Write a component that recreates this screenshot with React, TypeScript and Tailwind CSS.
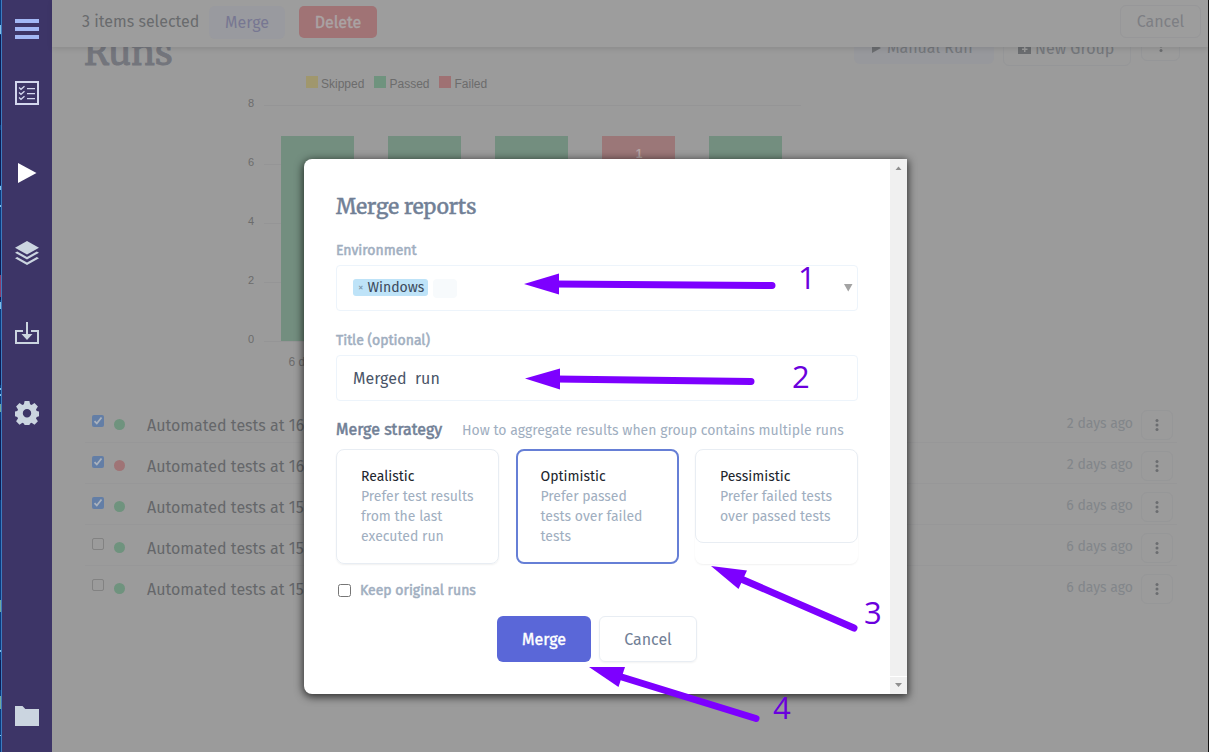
import React from "react";

const sans = "font-['Fira_Sans','Noto_Sans',sans-serif]";
const serif = "font-['Merriweather','DejaVu_Serif_Condensed','DejaVu_Serif',serif]";

const runs = [
  { checked: true, passed: true, title: "Automated tests at 16", when: "2 days ago" },
  { checked: true, passed: false, title: "Automated tests at 16", when: "2 days ago" },
  { checked: true, passed: true, title: "Automated tests at 15", when: "6 days ago" },
  { checked: false, passed: true, title: "Automated tests at 15", when: "6 days ago" },
  { checked: false, passed: true, title: "Automated tests at 15", when: "6 days ago" },
];

function Kebab() {
  return (
    <svg width="4" height="14" viewBox="0 0 4 14" fill="#6b6d70">
      <circle cx="2" cy="2.5" r="1.500" />
      <circle cx="2" cy="7" r="1.500" />
      <circle cx="2" cy="11.5" r="1.500" />
    </svg>
  );
}

function Sidebar() {
  return (
    <nav className="relative h-full w-[50px] shrink-0 bg-[#3d3567]">
      <svg width="50" height="752" viewBox="2 0 50 752" fill="#cbd5e0">
        <path fill="#a3b8f5" d="M15 19h24v4H15zM15 27h24v4H15zM15 35h24v4H15z" />
        <path
          fillRule="evenodd"
          fill="#d3d7ee"
          d="M15 81h24v24H15zM17 83v20h20V83zM27 88h8v1.2h-8zM27 93h8v1.2h-8zM27 98h8v1.2h-8z"
        />
        <path
          fill="none"
          stroke="#d3d7ee"
          strokeWidth="1.3"
          d="M19 87.5l2 1.8 3.5-3M19 92.5l2 1.8 3.5-3M19 97.5l2 1.8 3.5-3"
        />
        <path fill="#fff" d="M18 163l18.500 10L18 183z" />
        <path d="M27 241l12 6.700-12 6.700-12-6.700z" />
        <path d="M15 252.700l2.200-1.200 9.800 5.400 9.800-5.400 2.200 1.200-12 6.700z" />
        <path d="M15 258.200l2.200-1.200 9.800 5.400 9.800-5.400 2.200 1.200-12 6.700z" />
        <path d="M15 330h8v2h-6v10h20v-10h-6v-2h8v14H15z" />
        <path d="M26 322h2v12h4.500L27 340l-5.500-6H26z" />
        <path
          fillRule="evenodd"
          d="M24.600 401h4.800l.7 3.300 1.500.7 2.900-1.900 3.400 3.400-1.900 2.900.7 1.500 2.300.5v4.800l-2.300.7-.7 1.500 1.900 2.900-3.400 3.400-2.900-1.900-1.500.7-.7 1.500h-4.800l-.7-1.500-1.500-.7-2.900 1.900-3.400-3.400 1.900-2.900-.7-1.500-2.300-.7v-4.800l2.300-.5.7-1.500-1.900-2.900 3.400-3.400 2.900 1.900 1.500-.7zM27 409a4.200 4.200 0 1 0 0 8.400a4.200 4.200 0 1 0 0-8.400z"
        />
        <path d="M15 706h7.500l2.800 3H39v17H15z" />
      </svg>
    </nav>
  );
}

function Toolbar() {
  return (
    <header className="relative z-10 flex h-[47px] shrink-0 items-start bg-[#9d9d9d] pl-[30px] pr-[7px] shadow-[0_2px_5px_rgba(0,0,0,0.1)]">
      <span className="mt-[10px] w-[127px] whitespace-nowrap text-[16px] leading-6 text-[#696b6d]">3 items selected</span>
      <button className="mt-[6px] h-[33px] w-[76px] rounded-md bg-[#999a9f] text-[16px] leading-[31px] text-[#777792]">
        Merge
      </button>
      <button className="ml-[14px] mt-[6px] h-[32px] w-[78px] rounded-[5px] bg-[#a07375] text-[16px] leading-[31px] text-[#aaa3a4] [-webkit-text-stroke:0.4px_#aaa3a4]">
        Delete
      </button>
      <button className="ml-auto mt-[5px] h-[33px] w-[81px] rounded-md border border-[#979799] text-[16px] leading-[31px] text-[#7d7f84]">
        Cancel
      </button>
    </header>
  );
}

function Chart() {
  const bars = [229, 336, 443, 550, 657];
  return (
    <svg
      width="760"
      height="304"
      viewBox="0 72 760 304"
      className="block font-['Liberation_Sans',Arial,sans-serif] text-[12px]"
      fill="#6c6c6c"
    >
      <rect x="254" y="76" width="12" height="12" fill="#a0976d" />
      <text x="269" y="88">Skipped</text>
      <rect x="322" y="76" width="12" height="12" fill="#6f937e" />
      <text x="337.500" y="88">Passed</text>
      <rect x="387" y="76" width="12" height="12" fill="#9f7173" />
      <text x="402.500" y="88">Failed</text>
      {[8, 6, 4, 2, 0].map((n, i) => (
        <g key={n}>
          <rect x="212" y={105 + i * 59} width="537" height="1" fill="#959596" />
          <text x="202" y={107 + i * 59} textAnchor="end" fontSize="11">{n}</text>
        </g>
      ))}
      {bars.map((x, i) => (
        <rect key={x} x={x} y="136" width="73" height="205" fill={i === 3 ? "#9b7778" : "#738e7f"} />
      ))}
      <text x="587" y="158" textAnchor="middle" fill="#b5a5a5" fontWeight="bold">1</text>
      <text x="236.500" y="366">6 days ago</text>
    </svg>
  );
}

function RunList() {
  return (
    <ul className="ml-[33px] mr-[31px] mt-[26px]">
      {runs.map((r, i) => (
        <li
          key={i}
          className={
            "flex h-[41px] items-start pl-[7px] " + (i < runs.length - 1 ? "border-b border-[#979798]" : "")
          }
        >
          <span
            className={
              "mt-[13px] flex h-[12px] w-[12px] items-center justify-center rounded-[2px] " +
              (r.checked ? "bg-[#637ea6]" : "border border-[#828282]")
            }
          >
            {r.checked && (
              <svg width="10" height="10" viewBox="0 0 10 10" fill="none" stroke="#aab2bd" strokeWidth="1.800">
                <path d="M1.500 5.200l2.300 2.300 4.700-6" />
              </svg>
            )}
          </span>
          <span
            className={"ml-[10px] mt-[17px] h-[11px] w-[11px] rounded-full " + (r.passed ? "bg-[#6f937e]" : "bg-[#9f7476]")}
          />
          <span className="ml-[22px] mt-[12px] whitespace-nowrap text-[16px] leading-6 text-[#65676a]">{r.title}</span>
          <span className="ml-auto mt-[12px] whitespace-nowrap text-[14px] leading-5 text-[#82868a]">{r.when}</span>
          <span className="ml-[8px] mr-[4px] mt-[8px] flex h-[30px] w-[32px] items-center justify-center rounded-md border border-[#969798]">
            <Kebab />
          </span>
        </li>
      ))}
    </ul>
  );
}

function Page() {
  return (
    <main className="flex h-full min-w-0 grow flex-col bg-[#9b9b9b]">
      <Toolbar />
      <div className="h-[705px] overflow-hidden">
        <div className="-mt-[25px] flex h-[50px] items-start pl-[32px] pr-[28px]">
          <h1 className={serif + " mt-[11px] text-[36px] leading-[40px] text-[#73757c] [-webkit-text-stroke:0.9px_#73757c]"}>Runs</h1>
          <button className="ml-auto mt-[9px] flex h-[33px] w-[140px] items-center whitespace-nowrap rounded-md bg-[#97989c] pl-[18px] text-[16px] text-[#74777b]">
            <svg width="10" height="12" viewBox="0 0 10 12" className="mr-[5px]" fill="#6b6d70">
              <path d="M0 1l9 5-9 5z" />
            </svg>
            Manual Run
          </button>
          <button className="ml-[9px] mt-[9px] flex h-[35px] w-[128px] items-center whitespace-nowrap rounded-md border border-[#959698] pl-[14px] text-[16px] text-[#74777b]">
            <svg width="13" height="12" viewBox="0 0 13 12" className="mr-[4px] shrink-0" fill="#6b6d70">
              <path fillRule="evenodd" d="M0 0h5l2 2h6v9H0zM6 3.500v2H4V7h2v2h1.500V7h2V5.500h-2v-2z" />
            </svg>
            New Group
          </button>
          <span className="ml-[10px] mt-[9px] flex h-[30px] w-[39px] items-center justify-center rounded-md border border-[#959698]">
            <Kebab />
          </span>
        </div>
        <Chart />
        <RunList />
      </div>
    </main>
  );
}

function Strategy({ title, lines, className }: { title: string; lines: string[]; className: string }) {
  return (
    <div className={"box-border w-[163px] rounded-lg text-[14px] leading-5 " + className}>
      <div className="text-[#20242c]">{title}</div>
      {lines.map((l) => (
        <div key={l} className="whitespace-nowrap text-[#a0aec0]">{l}</div>
      ))}
    </div>
  );
}

function MergeDialog() {
  return (
    <section className="flex h-[535px] w-[603px] overflow-hidden rounded-l-lg bg-white shadow-[0_2px_9px_1px_rgba(0,0,0,0.7)]">
      <div className="w-[586px] pl-[32px] pt-[32px]">
        <h2 className={serif + " text-[20.700px] leading-[32px] text-[#718096] [-webkit-text-stroke:0.5px_#718096]"}>Merge reports</h2>

        <div className="mt-[18px] text-[14px] leading-5 text-[#a0aec0] [-webkit-text-stroke:0.5px_#a0aec0]">Environment</div>
        <div className="mt-[4px] flex h-[46px] w-[522px] items-center rounded border border-[#edf4fb] pl-[16px] pr-[4px]">
          <span className="mb-[2px] flex h-[17px] w-[75px] items-center rounded-[3px] bg-[#bee3f8] pl-[5px] text-[14px] leading-[17px] text-[#3c4a5c]">
            <span className="mr-[4px] text-[11px] text-[#7b97ab]">×</span>Windows
          </span>
          <span className="ml-[5px] h-[19px] w-[24px] rounded bg-[#f7fafc]" />
          <svg width="9" height="8" viewBox="0 0 9 8" className="ml-auto" fill="#a3a3a3">
            <path d="M0 0h8.500L4.250 7.500z" />
          </svg>
        </div>

        <div className="mt-[20px] text-[14px] leading-5 text-[#a0aec0] [-webkit-text-stroke:0.5px_#a0aec0]">Title (optional)</div>
        <div className="mt-[4px] flex h-[46px] w-[522px] items-center whitespace-pre rounded border border-[#edf4fb] pl-[16px] pt-px text-[16px] text-[#4a5568]">
          {"Merged  run"}
        </div>

        <div className="mt-[17px] flex h-[24px] items-center whitespace-nowrap">
          <span className="w-[126px] text-[16px] text-[#718096] [-webkit-text-stroke:0.55px_#718096]">Merge strategy</span>
          <span className="text-[14px] text-[#a0aec0]">How to aggregate results when group contains multiple runs</span>
        </div>

        <div className="mt-[7px] flex h-[115px] items-stretch gap-[16.500px]">
          <Strategy
            title="Realistic"
            lines={["Prefer test results", "from the last", "executed run"]}
            className="border border-[#e8edf3] pl-[24px] pt-[17px] shadow-[0_1px_2px_rgba(0,0,0,0.06)]"
          />
          <Strategy
            title="Optimistic"
            lines={["Prefer passed", "tests over failed", "tests"]}
            className="border-2 border-[#667fd6] pl-[23px] pt-[16px]"
          />
          <div className="rounded-lg shadow-[0_1px_2px_rgba(0,0,0,0.06)]">
            <Strategy
              title="Pessimistic"
              lines={["Prefer failed tests", "over passed tests"]}
              className="h-[94px] border border-[#e8edf3] pl-[24px] pt-[17px]"
            />
          </div>
        </div>

        <div className="mt-[16px] flex h-[20px] items-center text-[14px] text-[#a0aec0] [-webkit-text-stroke:0.5px_#a0aec0]">
          <span className="ml-[2px] mr-[9px] h-[13px] w-[13px] rounded-[2.500px] border border-[#767676]" />
          Keep original runs
        </div>

        <div className="mt-[16px] flex gap-[8px] pl-[161px] text-[16px]">
          <button className="h-[46px] w-[94px] rounded-md bg-[#5a67d8] pt-px text-white [-webkit-text-stroke:0.4px_#fff]">Merge</button>
          <button className="h-[46px] w-[98px] rounded-md border border-[#e8edf3] pt-px text-[#718096] shadow-[0_1px_2px_rgba(0,0,0,0.05)]">
            Cancel
          </button>
        </div>
      </div>
      <div className="flex w-[17px] flex-col items-center justify-between bg-[#f0f0f0]">
        <svg width="17" height="17" viewBox="0 0 17 17" fill="#8f8f8f">
          <path d="M5.500 11L8.500 7.500l3 3.500z" />
        </svg>
        <svg width="17" height="18" viewBox="0 0 17 18" fill="#8f8f8f">
          <path fill="#fff" d="M0 0h17v1H0z" />
          <path d="M5 7h7L8.500 11z" />
        </svg>
      </div>
    </section>
  );
}

const arrows = [
  { head: "524,284 559,273.500 559,294.500", line: "M555 284L772 285.500" },
  { head: "525,378.500 560,368.500 560,389.500", line: "M556 379L751 381.500" },
  { head: "711,566 747,570.500 738.500,589", line: "M740 578.500L854 628" },
  { head: "589,667 625,667 618.500,687", line: "M620 676.500L756 718.500" },
];

const digits = [
  { n: "1", at: "left-[798px] top-[258px]" },
  { n: "2", at: "left-[792px] top-[357px]" },
  { n: "3", at: "left-[864px] top-[593px]" },
  { n: "4", at: "left-[773px] top-[688px]" },
];

export default function App() {
  return (
    <div className={sans + " relative flex h-[752px] w-[1209px] overflow-hidden border-r border-[#111] bg-[#9b9b9b]"}>
      <svg width="2" height="752" viewBox="0 0 2 752" className="shrink-0">
        <path fill="#0a3a7e" d="M0 0h2v752H0z" />
        <path
          fill="#0b1c55"
          d="M0 35h1v90H0zM0 130h1v55H0zM0 240h1v60H0zM0 340h1v45H0zM0 420h1v80H0zM0 660h1v30H0z"
        />
        <path fill="#82bfe8" d="M0 25h1v9H0zM0 186h1v4H0zM0 205h1v2H0zM0 302h1v7H0zM0 388h1v2H0zM0 394h1v2H0zM0 650h1v2H0zM0 735h1v1H0z" />
        <path fill="#70a89c" d="M0 404h1v8H0zM0 600h1v12H0zM0 696h1v13H0z" />
        <path fill="#8c3a68" d="M0 275h1v22H0z" />
        <path fill="#3d7cc0" d="M1 0h1v752H1z" />
      </svg>
      <Sidebar />
      <Page />
      <div className="absolute inset-0 z-20 pl-[304px] pt-[159px]">
        <MergeDialog />
      </div>
      <svg width="1209" height="752" viewBox="0 0 1209 752" className="absolute left-0 top-0 z-30" fill="#7d00ff">
        {arrows.map((a) => (
          <g key={a.head}>
            <polygon points={a.head} />
            <path d={a.line} stroke="#7d00ff" strokeWidth="7" strokeLinecap="round" />
          </g>
        ))}
      </svg>
      {digits.map((d) => (
        <span key={d.n} className={"absolute z-40 font-['Open_Sans','Noto_Sans',sans-serif] text-[31px] font-normal leading-[38px] text-[#6a00dd] " + d.at}>
          {d.n}
        </span>
      ))}
    </div>
  );
}
